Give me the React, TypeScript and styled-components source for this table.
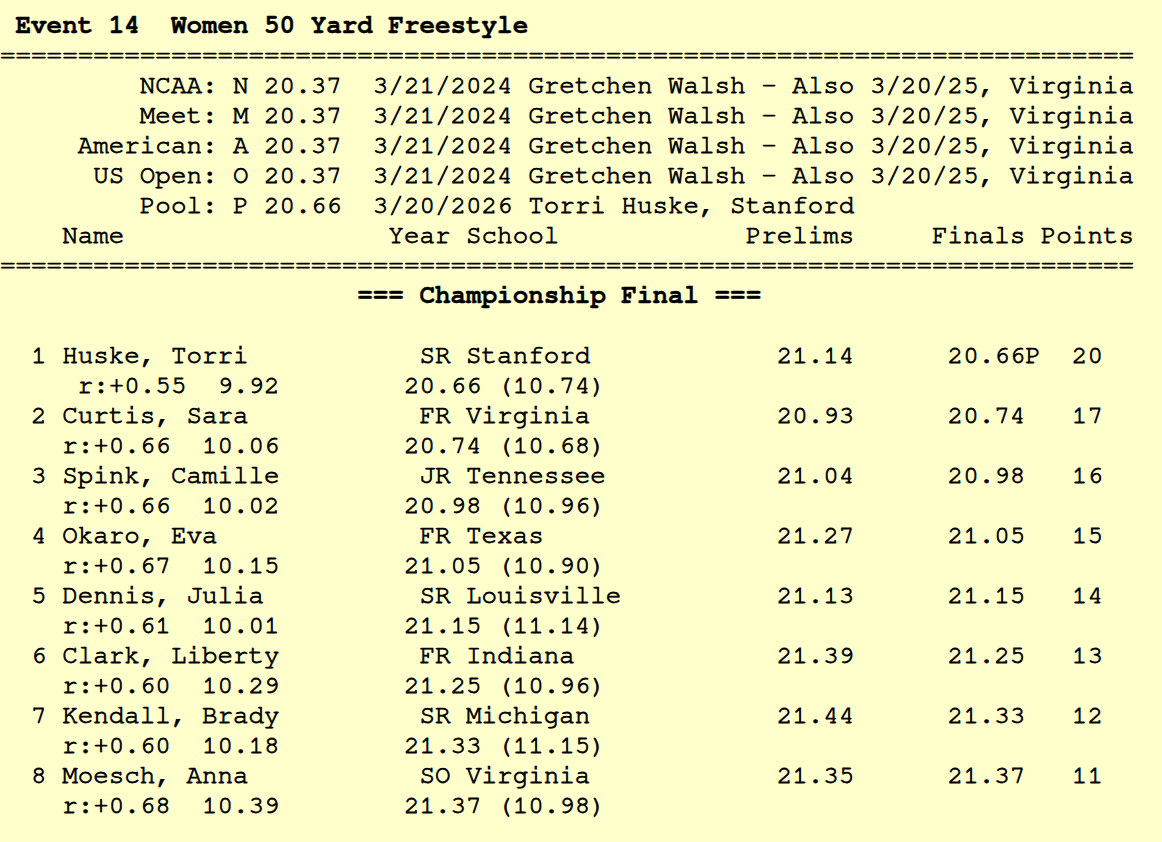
import React from "react";
import styled, { createGlobalStyle } from "styled-components";

const GlobalStyle = createGlobalStyle`
  html, body {
    margin: 0;
    padding: 0;
    background: #ffffcc;
  }
`;

const Page = styled.pre`
  margin: 0;
  padding: 10px 0 0 0;
  font-family: "Nimbus Mono PS", "Nimbus Mono L", "FreeMono", "Courier", "Liberation Mono", monospace;
  font-size: 25.9px;
  line-height: 30px;
  color: #000;
  white-space: pre;
`;

const Line = styled.span<{ $bold?: boolean }>`
  display: block;
  height: 30px;
  font-weight: ${(p) => (p.$bold ? 700 : 400)};
  -webkit-text-stroke: ${(p) => (p.$bold ? "0.4px" : "0.8px")} #000;
`;

type Cell = [number, string];

const place = (cells: Cell[]): string => {
  let s = "";
  for (const [col, text] of cells) {
    while (s.length < col) s += " ";
    s += text;
  }
  return s;
};

const rule = "=".repeat(73);

const records: [string, string, string, string][] = [
  ["NCAA:", "N", "20.37", "3/21/2024 Gretchen Walsh - Also 3/20/25, Virginia"],
  ["Meet:", "M", "20.37", "3/21/2024 Gretchen Walsh - Also 3/20/25, Virginia"],
  ["American:", "A", "20.37", "3/21/2024 Gretchen Walsh - Also 3/20/25, Virginia"],
  ["US Open:", "O", "20.37", "3/21/2024 Gretchen Walsh - Also 3/20/25, Virginia"],
  ["Pool:", "P", "20.66", "3/20/2026 Torri Huske, Stanford"],
];

type Swimmer = {
  place: string;
  name: string;
  school: string;
  prelims: string;
  finals: string;
  points: string;
  reaction: string;
  split: string;
  cumulative: string;
};

const swimmers: Swimmer[] = [
  { place: "1", name: "Huske, Torri", school: "SR Stanford", prelims: "21.14", finals: "20.66P", points: "20", reaction: "r:+0.55", split: "9.92", cumulative: "20.66 (10.74)" },
  { place: "2", name: "Curtis, Sara", school: "FR Virginia", prelims: "20.93", finals: "20.74", points: "17", reaction: "r:+0.66", split: "10.06", cumulative: "20.74 (10.68)" },
  { place: "3", name: "Spink, Camille", school: "JR Tennessee", prelims: "21.04", finals: "20.98", points: "16", reaction: "r:+0.66", split: "10.02", cumulative: "20.98 (10.96)" },
  { place: "4", name: "Okaro, Eva", school: "FR Texas", prelims: "21.27", finals: "21.05", points: "15", reaction: "r:+0.67", split: "10.15", cumulative: "21.05 (10.90)" },
  { place: "5", name: "Dennis, Julia", school: "SR Louisville", prelims: "21.13", finals: "21.15", points: "14", reaction: "r:+0.61", split: "10.01", cumulative: "21.15 (11.14)" },
  { place: "6", name: "Clark, Liberty", school: "FR Indiana", prelims: "21.39", finals: "21.25", points: "13", reaction: "r:+0.60", split: "10.29", cumulative: "21.25 (10.96)" },
  { place: "7", name: "Kendall, Brady", school: "SR Michigan", prelims: "21.44", finals: "21.33", points: "12", reaction: "r:+0.60", split: "10.18", cumulative: "21.33 (11.15)" },
  { place: "8", name: "Moesch, Anna", school: "SO Virginia", prelims: "21.35", finals: "21.37", points: "11", reaction: "r:+0.68", split: "10.39", cumulative: "21.37 (10.98)" },
];

const splitLine = (s: Swimmer): string => {
  const left = `${s.reaction}  ${s.split}`;
  return place([
    [18 - left.length, left],
    [26, s.cumulative],
  ]);
};

export default function App() {
  return (
    <>
      <GlobalStyle />
      <Page>
        <Line $bold>{" Event 14  Women 50 Yard Freestyle"}</Line>
        <Line>{rule}</Line>
        {records.map(([label, code, time, rest]) => (
          <Line key={label}>
            {place([
              [14 - label.length, label],
              [15, `${code} ${time}  ${rest}`],
            ])}
          </Line>
        ))}
        <Line>
          {place([
            [4, "Name"],
            [25, "Year School"],
            [48, "Prelims"],
            [60, "Finals Points"],
          ])}
        </Line>
        <Line>{rule}</Line>
        <Line $bold>{place([[23, "=== Championship Final ==="]])}</Line>
        <Line>{" "}</Line>
        {swimmers.map((s) => (
          <React.Fragment key={s.place}>
            <Line>
              {place([
                [2, `${s.place} ${s.name}`],
                [27, s.school],
                [50, s.prelims],
                [61, s.finals],
                [69, s.points],
              ])}
            </Line>
            <Line>{splitLine(s)}</Line>
          </React.Fragment>
        ))}
      </Page>
    </>
  );
}
